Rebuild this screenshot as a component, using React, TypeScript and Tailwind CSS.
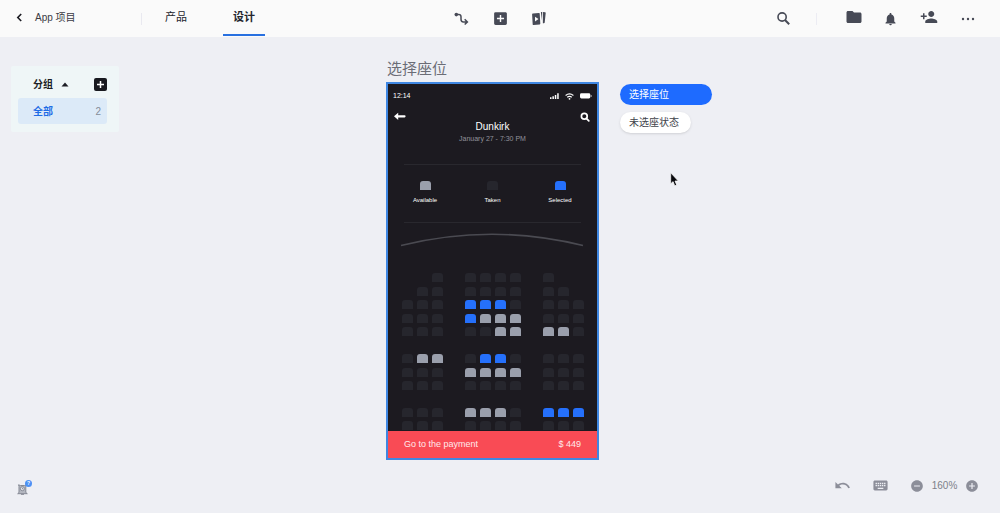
import React from "react";
import {
  MdAddBox,
  MdAddCircle,
  MdFolder,
  MdKeyboard,
  MdNotifications,
  MdPersonAdd,
  MdRemoveCircle,
  MdUndo,
} from "react-icons/md";

// Seat codes: "." empty, t taken, a available, s selected
const seatGroups: string[][][] = [
  [
    ["..t", "tttt", "t.."],
    [".tt", "tttt", "tt."],
    ["ttt", "ssst", "ttt"],
    ["ttt", "saaa", "ttt"],
    ["ttt", "ttaa", "aat"],
  ],
  [
    ["taa", "tsst", "ttt"],
    ["ttt", "aaaa", "ttt"],
    ["ttt", "tttt", "ttt"],
  ],
  [
    ["ttt", "aaat", "sss"],
    ["ttt", "tttt", "ttt"],
  ],
];

const groupHeights = ["h-[63px]", "h-[36px]", "h-[22px]"];

const seatColors: Record<string, string> = {
  ".": "bg-transparent",
  t: "bg-[#26262d]",
  a: "bg-[#9a9fac]",
  s: "bg-[#2570fb]",
};

function Seat({ kind }: { kind: string }) {
  return <span className={`block h-[9px] w-[11px] rounded-t-[3px] ${seatColors[kind]}`} />;
}

function IconButton({ label, children, className = "" }: { label: string; children: React.ReactNode; className?: string }) {
  return (
    <button type="button" aria-label={label} className={`flex shrink-0 items-center justify-center ${className}`}>
      {children}
    </button>
  );
}

function Header() {
  return (
    <header className="grid h-[37px] shrink-0 grid-cols-[1fr_auto_1fr] bg-[#fafafa] text-[#474a56]">
      <div className="flex items-center">
        <a href="#projects" className="flex w-[141px] items-center gap-3 pb-[2px] pl-4 text-[10px] text-[#3a3b43]">
          <svg width="7" height="9" viewBox="0 0 7 9" fill="none" stroke="#1b1b22" strokeWidth="1.6" aria-hidden="true">
            <path d="M5.2 1 1.8 4.5l3.4 3.5" />
          </svg>
          App 项目
        </a>
        <span className="h-3 w-px bg-[#e9e9f0]" />
        <nav className="flex gap-[26px] pl-[13px] text-[11px] text-[#24252d]">
          <a href="#product" className="flex h-[35px] w-[42px] items-center justify-center border-b-2 border-transparent">产品</a>
          <a href="#design" aria-current="page" className="flex h-[35px] w-[42px] items-center justify-center border-b-2 border-[#2870e0] font-bold">设计</a>
        </nav>
      </div>
      <div className="flex items-center gap-[22px]">
        <IconButton label="连线" className="w-[17px]">
          <svg width="15" height="14" viewBox="0 0 15 14" fill="none" stroke="currentColor" strokeWidth="1.5">
            <circle cx="2.3" cy="2.6" r="1.8" fill="currentColor" stroke="none" />
            <path d="M2.5 2.6h2.2c1.7 0 2.3.8 2.3 2.2v2.4c0 1.8.8 2.7 2.4 2.7H13M10.7 7.3l2.7 2.6-2.7 2.6" />
          </svg>
        </IconButton>
        <IconButton label="添加" className="w-[17px]"><MdAddBox size={17} /></IconButton>
        <IconButton label="预览" className="w-[17px]">
          <svg width="16" height="15" viewBox="0 0 16 15" fill="currentColor">
            <path d="M1.9 2.6 7.9 1.9q.7-.1.8.7l.6 9.9q.1.8-.6.9l-6.1.7q-.8.1-.9-.7l-.6-10q-.1-.7.8-.8Z" />
            <path d="M4 5.7v4.8l3.5-2.6Z" fill="#fafafa" />
            <path d="m9.9.9.6 8.7.6-8.7Zm1.9.1 2.3.2q.7.1.6.8l-1 9.6q-.1.7-.8.7h-1Z" />
          </svg>
        </IconButton>
      </div>
      <div className="flex items-center justify-end pr-6">
        <IconButton label="搜索" className="mr-[26px]">
          <svg width="13" height="13" viewBox="0 0 13 13" fill="none" stroke="currentColor" strokeWidth="1.6">
            <circle cx="5.1" cy="5" r="4.1" /><path d="m8 8 4.2 4.2" strokeWidth="2" />
          </svg>
        </IconButton>
        <span className="mr-7 h-3 w-px bg-[#ececf3]" />
        <div className="flex items-center gap-5">
          <IconButton label="文件夹"><MdFolder size={18} className="mb-[3px]" /></IconButton>
          <IconButton label="通知" className="w-[15px]"><MdNotifications size={18} /></IconButton>
          <IconButton label="邀请成员" className="w-[22px]"><MdPersonAdd size={18} className="mb-[3px]" /></IconButton>
          <IconButton label="更多" className="w-4">
            <svg width="14" height="4" viewBox="0 0 14 4" fill="currentColor">
              <circle cx="2" cy="2" r="1.2" /><circle cx="7" cy="2" r="1.2" /><circle cx="12" cy="2" r="1.2" />
            </svg>
          </IconButton>
        </div>
      </div>
    </header>
  );
}

function Groups() {
  return (
    <aside className="mt-[29px] ml-[11px] h-[66px] w-[108px] rounded-[2px] bg-[#eff6f7] pt-[10px] pr-3 pl-[7px] text-[10px]">
      <div className="flex h-4 items-center pl-[15px] font-bold text-[#1c1d25]">
        <button type="button" className="flex items-center gap-2">
          分组
          <svg width="8" height="5" viewBox="0 0 8 5" fill="currentColor" aria-hidden="true"><path d="m4 .5 3.5 4h-7Z" /></svg>
        </button>
        <IconButton label="新建分组" className="ml-auto size-[13px] rounded-[2px] bg-[#18191f]">
          <svg width="7" height="7" viewBox="0 0 7 7" stroke="#fff" strokeWidth="1.5"><path d="M3.5 0v7M0 3.5h7" /></svg>
        </IconButton>
      </div>
      <button type="button" className="mt-[6px] flex h-[26px] w-[89px] items-center justify-between rounded-[3px] bg-[#dceaf8] pr-[6px] pl-[15px]">
        <span className="font-bold text-[#1f6ce6]">全部</span>
        <span className="text-[#858c98]">2</span>
      </button>
    </aside>
  );
}

function Phone() {
  return (
    <div className="flex h-[378px] w-[213px] flex-col border-2 border-[#3f87e2] bg-[#1c1a20] text-white">
      <div className="flex h-6 shrink-0 items-center justify-between px-[5px] text-[7px]">
        <span>12:14</span>
        <div className="flex items-center gap-[6px]">
          <svg width="9" height="6" viewBox="0 0 9 6" fill="#fff" aria-hidden="true">
            <path d="M0 4.3h1.5V6H0zM2.4 3.3h1.5V6H2.4zM4.8 2h1.5v4H4.8zM7.2.3h1.5V6H7.2z" />
          </svg>
          <svg width="9" height="7" viewBox="0 0 9 7" fill="none" stroke="#fff" strokeWidth="1.1" aria-hidden="true">
            <path d="M.6 2.5q3.9-3.2 7.8 0M2.2 4.3q2.3-1.8 4.6 0" />
            <circle cx="4.5" cy="5.8" r=".9" fill="#fff" stroke="none" />
          </svg>
          <svg width="12" height="6" viewBox="0 0 12 6" fill="#fff" aria-hidden="true">
            <rect x="0" y=".3" width="10.3" height="5.2" rx="1.4" /><path d="M10.8 2v2l.8-.4V2.4Z" />
          </svg>
        </div>
      </div>
      <div className="flex shrink-0 items-start justify-between px-[5px]">
        <IconButton label="返回" className="mt-1 w-[14px]">
          <svg width="12" height="9" viewBox="0 0 12 9" fill="#fff"><path d="M0 4.3 4.2.7v2.5h6.4q1 0 1 1.1t-1 1.1H4.2V8Z" /></svg>
        </IconButton>
        <div className="pt-3 text-center">
          <h2 className="text-[10px] leading-[14px]">Dunkirk</h2>
          <p className="text-[7px] leading-[10px] text-[#92929b]">January 27 - 7:30 PM</p>
        </div>
        <IconButton label="查找" className="mt-1 w-[14px]">
          <svg width="10" height="10" viewBox="0 0 10 10" fill="none" stroke="#fff" strokeWidth="1.7"><circle cx="4.3" cy="4.2" r="2.9" /><path d="m6.3 6.3 2.5 2.6" strokeLinecap="round" /></svg>
        </IconButton>
      </div>
      <div className="mx-4 mt-5 flex h-[59px] shrink-0 justify-between border-y border-[#29282e] px-[2px] pt-4 text-[6px]">
        {[["a", "Available"], ["t", "Taken"], ["s", "Selected"]].map(([kind, label]) => (
          <div key={label} className="flex w-[38px] flex-col items-center gap-[5px] leading-[10px]">
            <Seat kind={kind} />
            {label}
          </div>
        ))}
      </div>
      <svg className="mx-auto mt-[9px] shrink-0" width="185" height="15" viewBox="0 0 185 15" fill="none" aria-hidden="true">
        <path d="M1 13.5Q92-9 183 13.5" stroke="#4a4a51" strokeWidth="1.6" />
      </svg>
      <div className="mt-[26px] mr-[13px] ml-[14px] flex flex-col gap-[18px]">
        {seatGroups.map((rows, g) => (
          <div key={g} className={`flex flex-col justify-between ${groupHeights[g]}`}>
            {rows.map((blocks, r) => (
              <div key={r} className="flex justify-between">
                {blocks.map((block, b) => (
                  <div key={b} className="flex gap-1">
                    {block.split("").map((kind, s) => <Seat key={s} kind={kind} />)}
                  </div>
                ))}
              </div>
            ))}
          </div>
        ))}
      </div>
      <button type="button" className="mt-auto flex h-[27px] shrink-0 items-center justify-between bg-[#f94b55] px-4 text-[9px] text-[#ffe9ea]">
        <span>Go to the payment</span>
        <span>$ 449</span>
      </button>
    </div>
  );
}

function Footer() {
  return (
    <footer className="mt-auto flex h-[53px] shrink-0 items-center justify-between pr-[21px] pb-[2px] pl-[17px] text-[#8c8e99]">
      <button type="button" aria-label="提醒" className="relative mt-2 flex">
        <svg width="11" height="11" viewBox="0 0 11 11" fill="none" stroke="#858994" strokeWidth="1">
          <path d="M2 8.5V2.2L1.5.8l2 .7h4l1.6-.7L8.8 2.3v6.2l1.5 1.2H.7Z" fill="#b4b7c0" />
          <circle cx="5.4" cy="4.7" r="2" fill="#eeeff4" /><path d="M5.4 3.7v1.2h1M4 10.3h3" />
        </svg>
        <span className="absolute -top-[4px] left-[8px] flex size-[7px] items-center justify-center rounded-full bg-[#4c91f5] text-[5px] leading-none font-bold text-white">?</span>
      </button>
      <div className="flex items-center">
        <IconButton label="撤销" className="mr-[21px]"><MdUndo size={17} /></IconButton>
        <IconButton label="快捷键" className="mr-[21px]"><MdKeyboard size={17} /></IconButton>
        <IconButton label="缩小"><MdRemoveCircle size={14} /></IconButton>
        <span className="w-[41px] text-center text-[10px] text-[#7d7f89]">160%</span>
        <IconButton label="放大"><MdAddCircle size={14} /></IconButton>
      </div>
    </footer>
  );
}

export default function App() {
  return (
    <div className="flex min-h-screen flex-col bg-[#eeeff4] font-['Liberation_Sans','Noto_Sans_CJK_SC',sans-serif]">
      <Header />
      <main className="grid grid-cols-[1fr_auto_1fr] pr-[15px]">
        <Groups />
        <section className="pt-[22px]">
          <h1 className="pl-px text-[15px] leading-5 text-[#6b6d76]">选择座位</h1>
          <div className="mt-[3px]"><Phone /></div>
        </section>
        <div className="flex flex-col items-start gap-[7px] pt-[47px] pl-[21px] text-[10px]">
          <button type="button" className="h-[21px] w-[92px] rounded-full bg-[#1e6bff] pl-[9px] text-left text-white">选择座位</button>
          <button type="button" className="h-[21px] w-[71px] rounded-full bg-white pl-[9px] text-left text-[#41434b] shadow-sm">未选座状态</button>
          <svg className="pointer-events-none mt-8 ml-[50px]" width="9" height="15" viewBox="0 0 9 15" aria-hidden="true">
            <path d="M.7.8v11l2.4-2.2 1.6 4.2 2-.8-1.7-4H8.3Z" fill="#08080c" stroke="#fff" strokeWidth=".7" />
          </svg>
        </div>
      </main>
      <Footer />
    </div>
  );
}
